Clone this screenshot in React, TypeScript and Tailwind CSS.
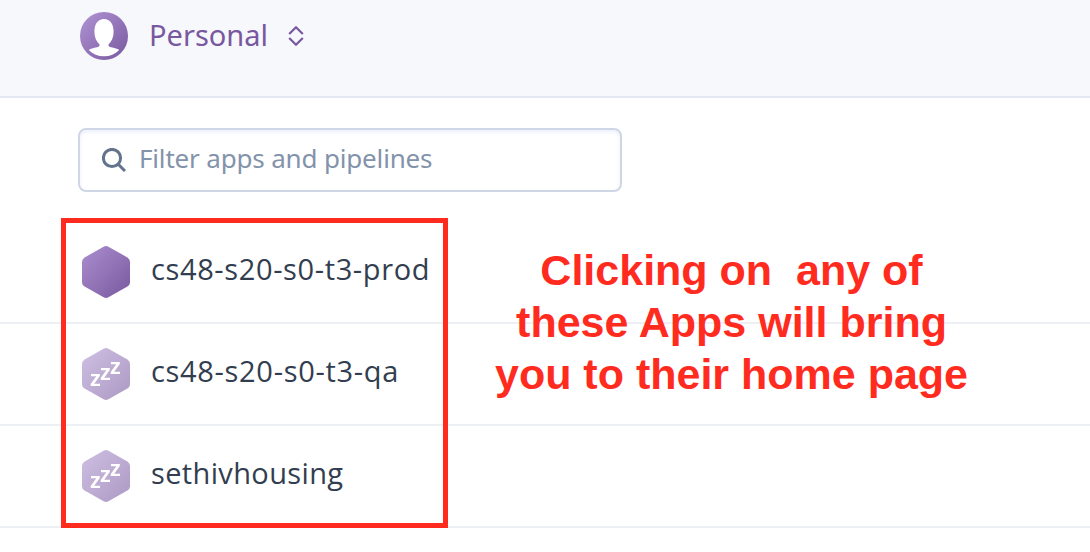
import React from "react";

type AppItem = { name: string; asleep: boolean; tracking: string };

const apps: AppItem[] = [
  { name: "cs48-s20-s0-t3-prod", asleep: false, tracking: "tracking-[0.62px]" },
  { name: "cs48-s20-s0-t3-qa", asleep: true, tracking: "tracking-[0.68px]" },
  { name: "sethivhousing", asleep: true, tracking: "tracking-[0.36px]" },
];

function Avatar() {
  return (
    <svg className="size-12 shrink-0" viewBox="0 0 48 48" aria-hidden="true">
      <defs>
        <linearGradient id="avatar" x1="0" y1="0" x2="1" y2="1">
          <stop offset="0" stopColor="#b094d4" />
          <stop offset="1" stopColor="#79589f" />
        </linearGradient>
      </defs>
      <circle cx="24" cy="24" r="24" fill="url(#avatar)" />
      <path
        d="M24 7C30 7 33.6 12 33.6 20C33.6 25.5 31.5 29.7 28.6 32.2C28.2 34 28.8 34.8 31 35.2C34.5 35.9 37.5 36.6 39.2 38C35.2 42.1 30 44.3 24 44.3C18 44.3 12.8 42.1 8.8 38C10.5 36.6 13.5 35.9 17 35.2C19.2 34.8 19.8 34 19.4 32.2C16.5 29.7 14.4 25.5 14.4 20C14.4 12 18 7 24 7Z"
        fill="#fff"
      />
    </svg>
  );
}

function AppIcon({ asleep }: { asleep: boolean }) {
  return (
    <svg className="h-[52px] w-12 shrink-0" viewBox="0 0 48 52" aria-hidden="true">
      <defs>
        <linearGradient id="hex" x1="0" y1="0" x2="1" y2="1">
          <stop offset="0" stopColor="#ab8fce" />
          <stop offset="1" stopColor="#79589f" />
        </linearGradient>
        <linearGradient id="hexAsleep" x1="0" y1="0" x2="1" y2="1">
          <stop offset="0" stopColor="#cebfe2" />
          <stop offset="1" stopColor="#ad99c4" />
        </linearGradient>
      </defs>
      <path
        d="M21.6 .7Q24 -.6 26.4 .7L45.4 11.4Q48 13 48 15.8V36.2Q48 39 45.4 40.6L26.4 51.3Q24 52.6 21.6 51.3L2.6 40.6Q0 39 0 36.2V15.8Q0 13 2.6 11.4Z"
        fill={asleep ? "url(#hexAsleep)" : "url(#hex)"}
      />
      {asleep && (
        <path
          d="M9 26h8.8v2l-5.6 7.8h5.8v2.2h-9.3v-2l5.6-7.8h-5.3zM19 20h8.8v2l-5.6 7.8h5.8v2.2h-9.3v-2l5.6-7.8h-5.3zM29 14h8.8v2l-5.6 7.8h5.8v2.2h-9.3v-2l5.6-7.8h-5.3z"
          fill="#fff"
        />
      )}
    </svg>
  );
}

export default function App() {
  return (
    <div className="relative h-[552px] w-[1090px] overflow-hidden bg-white font-['Noto_Sans',sans-serif]">
      <header className="flex h-[98px] items-start border-b-2 border-[#e3e8f3] bg-[#f7f8fc] pt-3 pl-20">
        <Avatar />
        <span className="ml-[21px] w-[119px] text-[29px] leading-[46px] font-normal whitespace-nowrap text-[#79589f]">
          Personal
        </span>
        <svg className="mt-3.5 ml-5 h-5 w-4" viewBox="0 0 16 20" fill="none" stroke="#79589f" strokeWidth="2.2" aria-hidden="true">
          <path d="M1.2 8L8 1.2L14.8 8M1.2 12L8 18.8L14.8 12" strokeLinejoin="round" />
        </svg>
      </header>

      <main>
        <div className="px-[78px] pt-[30px] pb-[30px]">
          <label className="flex h-16 w-[544px] items-center rounded-lg border-2 border-[#cfd7e6] bg-white pl-[22px] shadow-[inset_0_2px_4px_#ebeffa]">
            <svg className="size-6 shrink-0" viewBox="0 0 24 24" fill="none" stroke="#62738d" strokeWidth="3" aria-hidden="true">
              <circle cx="10" cy="10" r="8.6" />
              <path d="M16 16L23 23" />
            </svg>
            <span className="ml-[13px] pb-1 text-[26px] leading-9 font-normal tracking-[-0.17px] whitespace-nowrap text-[#8393ab]">
              Filter apps and pipelines
            </span>
          </label>
        </div>

        <ul>
          {apps.map((app) => (
            <li key={app.name} className="flex h-[102px] items-center border-b-2 border-[#edf1f6] pl-[82px]">
              <AppIcon asleep={app.asleep} />
              <span className={`ml-[21px] pb-1.5 font-['Open_Sans',sans-serif] text-[29px] leading-10 whitespace-nowrap text-[#323e4f] ${app.tracking}`}>
                {app.name}
              </span>
            </li>
          ))}
        </ul>
      </main>

      <div className="absolute top-[218px] left-[61px] h-[310px] w-[387px] border-5 border-[#ff2b1f]" />
      <p className="absolute top-[244px] left-[481.5px] w-[500px] text-center font-['Liberation_Sans',Arial,sans-serif] text-[43px] leading-[52px] font-bold whitespace-pre text-[#ff2b1f]">
        {"Clicking on  any of\nthese Apps will bring\nyou to their home page"}
      </p>
    </div>
  );
}
